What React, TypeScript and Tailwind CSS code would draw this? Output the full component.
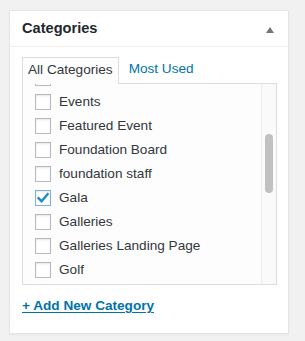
import React from "react";

const cats = [
  { name: "Events", checked: false },
  { name: "Featured Event", checked: false },
  { name: "Foundation Board", checked: false },
  { name: "foundation staff", checked: false },
  { name: "Gala", checked: true },
  { name: "Galleries", checked: false },
  { name: "Galleries Landing Page", checked: false },
  { name: "Golf", checked: false },
];

const CheckBox = ({ checked }: { checked: boolean }) => (
  <span
    className={`w-4 h-4 shrink-0 border bg-white shadow-[inset_0_1px_2px_rgba(0,0,0,0.1)] flex items-center justify-center ${
      checked ? "border-[#7fb1dc]" : "border-[#b4b9be]"
    }`}
  >
    {checked && (
      <svg width="14" height="14" viewBox="0 0 14 14">
        <path
          d="M2.5 7.2 L5.6 10.3 L11.6 3.2"
          fill="none"
          stroke="#1e8cbe"
          strokeWidth="2.4"
          strokeLinecap="square"
        />
      </svg>
    )}
  </span>
);

export default function App() {
  return (
    <div
      className="w-[305px] h-[341px] bg-[#f1f1f1] pt-[10px] pl-[9px] overflow-hidden"
      style={{ fontFamily: '"Liberation Sans", Arial, sans-serif' }}
    >
      <div className="w-[280px] h-[324px] bg-white border border-[#e5e5e5] shadow-[0_1px_1px_rgba(0,0,0,0.04)] flex flex-col">
        <div className="h-[36px] border-b border-[#eeeeee] flex items-center justify-between pl-[12px] pr-[14px]">
          <h2 className="text-[14.6px] font-bold text-[#23282d]">Categories</h2>
          <svg width="8" height="6" viewBox="0 0 8 6" className="mt-[2px]">
            <path d="M4 0 L8 6 L0 6 Z" fill="#72777c" />
          </svg>
        </div>

        <div className="px-[12px] pt-[9px]">
          <div className="flex items-end text-[13.6px]">
            <div className="h-[27px] px-[5px] pb-[2px] flex items-center border border-b-0 border-[#dddddd] bg-[#fdfdfd] text-[#32373c] relative top-[1px]">
              All Categories
            </div>
            <div className="h-[26px] px-[10px] pb-[2px] flex items-center text-[#0073aa]">
              Most Used
            </div>
          </div>

          <div className="w-[255px] h-[202px] border border-[#dddddd] bg-[#fdfdfd] flex overflow-hidden">
            <div className="flex-1 flex flex-col pl-[12px]">
              {/* row scrolled above the top edge: only its checkbox's bottom shows */}
              <div className="h-[2px] overflow-hidden flex items-end shrink-0">
                <CheckBox checked={false} />
              </div>
              <ul className="mt-[4px]">
                {cats.map((c) => (
                  <li
                    key={c.name}
                    className="h-[24px] flex items-center gap-[8px] text-[13.6px] text-[#32373c] whitespace-nowrap"
                  >
                    <CheckBox checked={c.checked} />
                    <span>{c.name}</span>
                  </li>
                ))}
              </ul>
            </div>
            <div className="w-[15px] border-l border-[#ececec] bg-[#fafafa] pt-[50px] pl-[3px]">
              <div className="w-[8px] h-[59px] rounded-full bg-[#c1c1c1]" />
            </div>
          </div>

          <div className="mt-[11px] leading-[18px]">
            <a
              href="#"
              className="text-[13.6px] font-bold text-[#0073aa] underline underline-offset-[2px]"
            >
              + Add New Category
            </a>
          </div>
        </div>
      </div>
    </div>
  );
}
